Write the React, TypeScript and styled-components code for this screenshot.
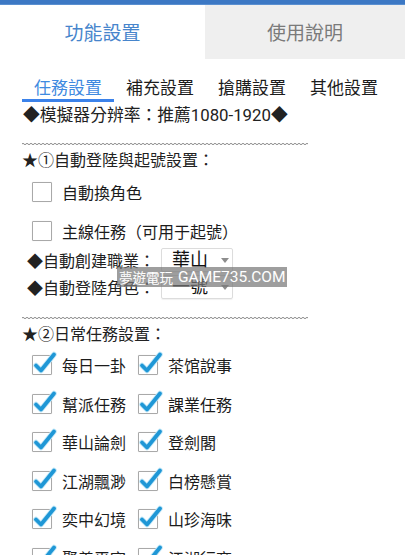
import React from "react";
import styled, { createGlobalStyle } from "styled-components";

const GlobalStyle = createGlobalStyle`
  html, body { margin: 0; padding: 0; background: #ffffff; }
  body {
    font-family: Roboto, "Noto Sans CJK TC", "Noto Sans CJK SC", sans-serif;
    color: #1c1c1c;
    overflow: hidden;
  }
`;

const Page = styled.div`
  position: relative;
  width: 405px;
  height: 555px;
  overflow: hidden;
  background: #fff;
`;

const TopBar = styled.div`
  height: 5px;
  background: linear-gradient(#3c78c4 0 4px, #5a8fd0 4px 5px);
`;

const TabBar = styled.div`
  display: grid;
  grid-template-columns: 205px 1fr;
  height: 54px;
`;

const MainTab = styled.div<{ $active?: boolean }>`
  display: flex;
  align-items: center;
  justify-content: center;
  font-size: 19px;
  background: ${(p) => (p.$active ? "#ffffff" : "#efefef")};
  color: ${(p) => (p.$active ? "#4785cc" : "#7a7a7a")};
  padding-bottom: 1px;
`;

const Content = styled.div`
  padding-left: 22px;
`;

const SubTabs = styled.div`
  display: flex;
`;

const SubTab = styled.div<{ $active?: boolean }>`
  width: 92px;
  padding-top: 18px;
  height: 22px;
  line-height: 22px;
  text-align: center;
  font-size: 17px;
  color: ${(p) => (p.$active ? "#3f8ae0" : "#1c1c1c")};
  border-bottom: 3px solid ${(p) => (p.$active ? "#3b82ea" : "transparent")};
`;

const Line = styled.div<{ $h?: number; $mt?: number; $indent?: number; $fs?: number }>`
  height: ${(p) => p.$h ?? 22}px;
  line-height: ${(p) => p.$h ?? 22}px;
  margin-top: ${(p) => p.$mt ?? 0}px;
  padding-left: ${(p) => p.$indent ?? 0}px;
  font-size: ${(p) => p.$fs ?? 16}px;
  color: #222;
  white-space: nowrap;
`;

const WaveWrap = styled.div<{ $mt: number }>`
  margin-top: ${(p) => p.$mt}px;
  width: 286px;
  height: 4px;
  display: flex;
`;

const Wave = ({ mt }: { mt: number }) => (
  <WaveWrap $mt={mt}>
    <svg width="286" height="4" viewBox="0 0 286 4">
      <defs>
        <pattern id={`w${mt}`} width="4" height="4" patternUnits="userSpaceOnUse">
          <path d="M0 2 Q1 0.6 2 2 T4 2" fill="none" stroke="#7a7a7a" strokeWidth="0.9" />
        </pattern>
      </defs>
      <rect x="0" y="0" width="286" height="4" fill={`url(#w${mt})`} />
    </svg>
  </WaveWrap>
);

const CheckRow = styled.div`
  height: 39px;
  display: flex;
  align-items: center;
  padding-left: 10px;
`;

const Grid = styled.div`
  display: grid;
  grid-template-columns: 106px auto;
  grid-auto-rows: 38.5px;
  padding-left: 10px;
  width: 240px;
`;

const Item = styled.div`
  display: flex;
  align-items: center;
`;

const Box = styled.span`
  position: relative;
  flex: none;
  width: 20px;
  height: 20px;
  box-sizing: border-box;
  border: 1.5px solid #a9a9a9;
  border-radius: 1px;
  background: #fff;
  box-shadow: 0 0 1px rgba(0, 0, 0, 0.15);
`;

const CheckSvg = styled.svg`
  position: absolute;
  left: -2px;
  top: -5px;
  overflow: visible;
`;

const Label = styled.span`
  margin-left: 10px;
  font-size: 16px;
  color: #1c1c1c;
  white-space: nowrap;
`;

const CheckBox = ({ checked }: { checked?: boolean }) => (
  <Box>
    {checked && (
      <CheckSvg width="26" height="26" viewBox="0 0 26 26">
        <path d="M5 14.5 L10 19.5 L23 3.5" fill="none" stroke="#c6e9f8" strokeWidth="5.6" strokeLinecap="round" strokeLinejoin="round" />
        <path d="M5 14.5 L10 19.5 L23 3.5" fill="none" stroke="#1f97d6" strokeWidth="3.8" strokeLinecap="round" strokeLinejoin="round" />
      </CheckSvg>
    )}
  </Box>
);

const SelectRow = styled.div<{ $mt?: number }>`
  display: flex;
  align-items: center;
  height: 24px;
  margin-top: ${(p) => p.$mt ?? 0}px;
  padding-left: 5px;
`;

const SelectLabel = styled.span`
  width: 134px;
  font-size: 16px;
  color: #222;
  white-space: nowrap;
`;

const Select = styled.div`
  position: relative;
  box-sizing: border-box;
  width: 72px;
  height: 24px;
  border: 1px solid #dcdcdc;
  border-radius: 2px;
  box-shadow: 0 1px 1px rgba(0, 0, 0, 0.06);
  padding-left: 10px;
  font-size: 18px;
  line-height: 22px;
  color: #111;
`;

const Arrow = styled.span`
  position: absolute;
  right: 3px;
  top: 9px;
  width: 0;
  height: 0;
  border-left: 4.5px solid transparent;
  border-right: 4.5px solid transparent;
  border-top: 5px solid #8d8d8d;
`;

const Watermark = styled.div`
  position: absolute;
  left: 117px;
  top: 267px;
  width: 170px;
  height: 20px;
  box-sizing: border-box;
  padding-left: 2px;
  display: flex;
  align-items: center;
  gap: 5px;
  background: rgba(120, 120, 120, 0.72);
  color: #fff;
  white-space: nowrap;
  overflow: hidden;
  font-family: Roboto, "Noto Sans CJK TC", sans-serif;
`;

const MarkCjk = styled.span`
  font-size: 13.5px;
`;

const MarkLatin = styled.span`
  font-size: 15.5px;
`;

const daily: [string, string][] = [
  ["每日一卦", "茶馆說事"],
  ["幫派任務", "課業任務"],
  ["華山論劍", "登劍閣"],
  ["江湖飄渺", "白榜懸賞"],
  ["奕中幻境", "山珍海味"],
  ["聚義平寇", "江湖行商"],
];

export default function App() {
  return (
    <>
      <GlobalStyle />
      <Page>
        <TopBar />
        <TabBar>
          <MainTab $active>功能設置</MainTab>
          <MainTab>使用說明</MainTab>
        </TabBar>
        <Content>
          <SubTabs>
            <SubTab $active>任務設置</SubTab>
            <SubTab>補充設置</SubTab>
            <SubTab>搶購設置</SubTab>
            <SubTab>其他設置</SubTab>
          </SubTabs>
          <Line $h={26} $indent={1} $fs={16.8}>◆模擬器分辨率：推薦1080-1920◆</Line>
          <Wave mt={14} />
          <Line $mt={4}>★①自動登陸與起號設置：</Line>
          <CheckRow>
            <CheckBox />
            <Label>自動換角色</Label>
          </CheckRow>
          <CheckRow>
            <CheckBox />
            <Label>主線任務（可用于起號）</Label>
          </CheckRow>
          <SelectRow $mt={-2}>
            <SelectLabel>◆自動創建職業：</SelectLabel>
            <Select>
              華山
              <Arrow />
            </Select>
          </SelectRow>
          <SelectRow $mt={3}>
            <SelectLabel>◆自動登陸角色：</SelectLabel>
            <Select>
              一號
              <Arrow />
            </Select>
          </SelectRow>
          <Wave mt={17} />
          <Line $mt={4}>★②日常任務設置：</Line>
          <Grid>
            {daily.flatMap(([a, b]) => [
              <Item key={a}>
                <CheckBox checked />
                <Label>{a}</Label>
              </Item>,
              <Item key={b}>
                <CheckBox checked />
                <Label>{b}</Label>
              </Item>,
            ])}
          </Grid>
        </Content>
        <Watermark>
          <MarkCjk>夢遊電玩</MarkCjk>
          <MarkLatin>GAME735.COM</MarkLatin>
        </Watermark>
      </Page>
    </>
  );
}
